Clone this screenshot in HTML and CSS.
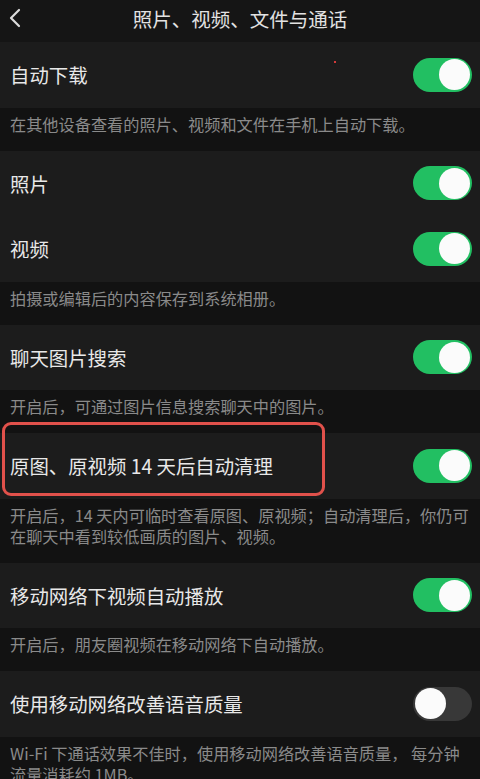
FILE: index.html
```html
<!DOCTYPE html>
<html lang="zh-CN">
<head>
<meta charset="utf-8">
<link rel="stylesheet" href="styles.css">
</head>
<body>
<div class="page">
  <header class="header">
    <span class="back">
      <svg width="14" height="20" viewBox="0 0 14 20"><path d="M11 2 L3 10 L11 18" fill="none" stroke="#dcdcdc" stroke-width="2.2" stroke-linecap="round" stroke-linejoin="round"/></svg>
    </span>
    <h1 class="title">照片、视频、文件与通话</h1>
    <span></span>
  </header>

  <div class="row"><span class="label">自动下载</span><span class="switch on"><span class="knob"></span></span><span class="dot"></span></div>
  <div class="desc">在其他设备查看的照片、视频和文件在手机上自动下载。</div>

  <div class="row"><span class="label">照片</span><span class="switch on"><span class="knob"></span></span></div>
  <div class="row"><span class="label">视频</span><span class="switch on"><span class="knob"></span></span></div>
  <div class="desc">拍摄或编辑后的内容保存到系统相册。</div>

  <div class="row"><span class="label">聊天图片搜索</span><span class="switch on"><span class="knob"></span></span></div>
  <div class="desc">开启后，可通过图片信息搜索聊天中的图片。</div>

  <div class="row marked"><span class="label">原图、原视频 14 天后自动清理</span><span class="switch on"><span class="knob"></span></span><span class="highlight"></span></div>
  <div class="desc">开启后，14 天内可临时查看原图、原视频；自动清理后，你仍可在聊天中看到较低画质的图片、视频。</div>

  <div class="row"><span class="label">移动网络下视频自动播放</span><span class="switch on"><span class="knob"></span></span></div>
  <div class="desc">开启后，朋友圈视频在移动网络下自动播放。</div>

  <div class="row"><span class="label">使用移动网络改善语音质量</span><span class="switch off"><span class="knob"></span></span></div>
  <div class="desc">Wi-Fi 下通话效果不佳时，使用移动网络改善语音质量， 每分钟流量消耗约 1MB。</div>
</div>
</body>
</html>
```

FILE: styles.css
```css
* { box-sizing: border-box; margin: 0; padding: 0; }
html, body { background: #121212; }
body {
  width: 480px;
  height: 779px;
  overflow: hidden;
  font-family: "Noto Sans CJK SC", "Noto Sans", sans-serif;
}
.page { display: flex; flex-direction: column; }
.header {
  height: 42px;
  background: #151515;
  display: grid;
  grid-template-columns: 40px 1fr 40px;
  align-items: center;
}
.back { display: flex; align-items: center; padding-left: 8px; padding-bottom: 6px; }
.title {
  text-align: center;
  font-size: 19.5px;
  font-weight: 400;
  color: #e2e2e2;
  padding-bottom: 6px;
}
.row {
  position: relative;
  height: 65.5px;
  background: #1c1c1c;
  display: flex;
  align-items: center;
  justify-content: space-between;
  padding: 0 8px 0 10px;
}
.label {
  font-size: 19.4px;
  color: #e8e8e8;
  line-height: 1;
}
.desc {
  background: #121212;
  color: #8a8a8a;
  font-size: 16.2px;
  line-height: 21px;
  padding: 6px 10px 16px 10px;
}
.switch {
  width: 59px;
  height: 34px;
  border-radius: 17px;
  display: flex;
  align-items: center;
  padding: 0 2px;
}
.switch.on { background: #22bf62; justify-content: flex-end; }
.switch.off { background: #383838; justify-content: flex-start; }
.knob {
  width: 31px;
  height: 31px;
  border-radius: 50%;
  background: #fbfbfb;
}
.dot {
  position: absolute;
  left: 334px;
  top: 19px;
  width: 2px;
  height: 2px;
  background: #d23a3a;
}
.highlight {
  position: absolute;
  left: 2px;
  top: -11px;
  width: 323px;
  height: 74px;
  border: 3px solid #e1514b;
  border-radius: 9px;
}
```
